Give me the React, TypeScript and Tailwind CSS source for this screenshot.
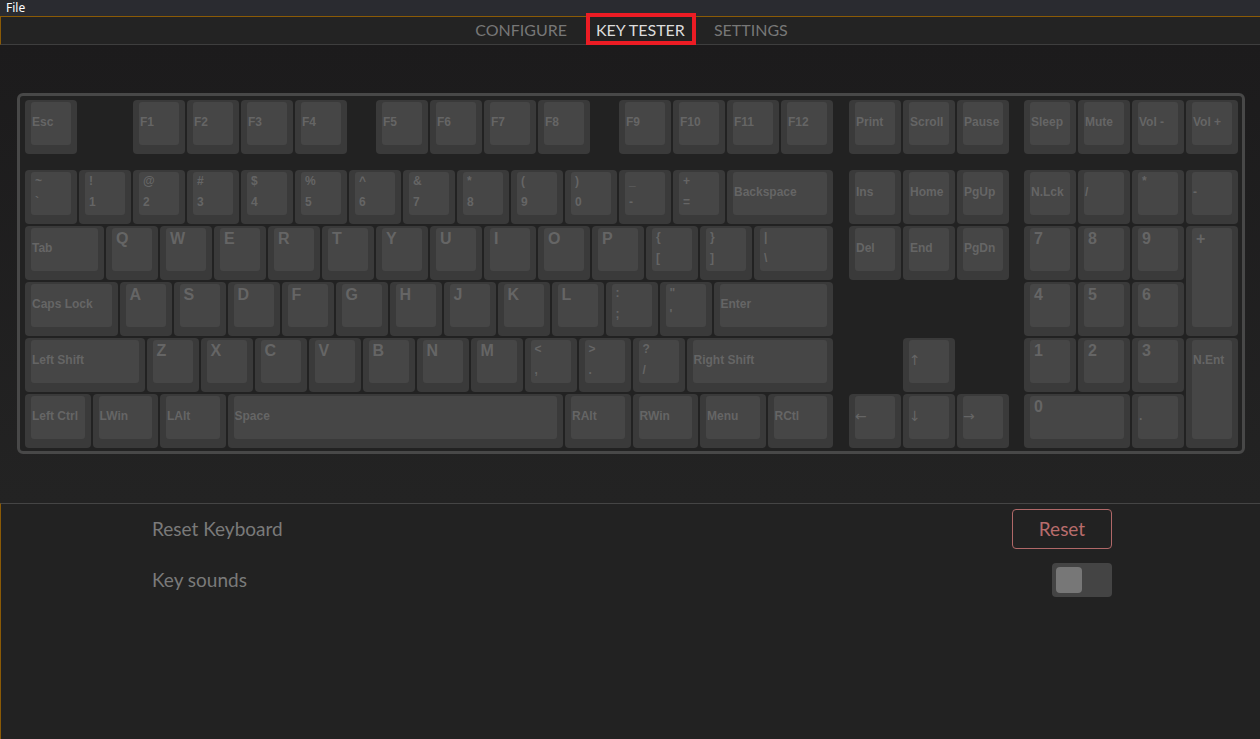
import React from "react";

type KeyDef = {
  n?: string; // name label (small, centered)
  c?: string; // character label (large, top)
  t?: string; // two-label top
  b?: string; // two-label bottom
  a?: boolean; // arrow glyph
  w?: number;
  sp?: number; // spacer width in units
};

const U = 54;

const fnRow: KeyDef[] = [
  { n: "Esc" },
  { sp: 1 },
  { n: "F1" },
  { n: "F2" },
  { n: "F3" },
  { n: "F4" },
  { sp: 0.5 },
  { n: "F5" },
  { n: "F6" },
  { n: "F7" },
  { n: "F8" },
  { sp: 0.5 },
  { n: "F9" },
  { n: "F10" },
  { n: "F11" },
  { n: "F12" },
];

const mainRows: KeyDef[][] = [
  [
    { t: "~", b: "`" },
    { t: "!", b: "1" },
    { t: "@", b: "2" },
    { t: "#", b: "3" },
    { t: "$", b: "4" },
    { t: "%", b: "5" },
    { t: "^", b: "6" },
    { t: "&", b: "7" },
    { t: "*", b: "8" },
    { t: "(", b: "9" },
    { t: ")", b: "0" },
    { t: "_", b: "-" },
    { t: "+", b: "=" },
    { n: "Backspace", w: 2 },
  ],
  [
    { n: "Tab", w: 1.5 },
    ..."QWERTYUIOP".split("").map((c) => ({ c })),
    { t: "{", b: "[" },
    { t: "}", b: "]" },
    { t: "|", b: "\\", w: 1.5 },
  ],
  [
    { n: "Caps Lock", w: 1.75 },
    ..."ASDFGHJKL".split("").map((c) => ({ c })),
    { t: ":", b: ";" },
    { t: "\"", b: "'" },
    { n: "Enter", w: 2.25 },
  ],
  [
    { n: "Left Shift", w: 2.25 },
    ..."ZXCVBNM".split("").map((c) => ({ c })),
    { t: "<", b: "," },
    { t: ">", b: "." },
    { t: "?", b: "/" },
    { n: "Right Shift", w: 2.75 },
  ],
  [
    { n: "Left Ctrl", w: 1.25 },
    { n: "LWin", w: 1.25 },
    { n: "LAlt", w: 1.25 },
    { n: "Space", w: 6.25 },
    { n: "RAlt", w: 1.25 },
    { n: "RWin", w: 1.25 },
    { n: "Menu", w: 1.25 },
    { n: "RCtl", w: 1.25 },
  ],
];

const navTop: KeyDef[] = [{ n: "Print" }, { n: "Scroll" }, { n: "Pause" }];
const navRows: KeyDef[][] = [
  [{ n: "Ins" }, { n: "Home" }, { n: "PgUp" }],
  [{ n: "Del" }, { n: "End" }, { n: "PgDn" }],
  [],
  [{ sp: 1 }, { n: "↑", a: true }],
  [
    { n: "←", a: true },
    { n: "↓", a: true },
    { n: "→", a: true },
  ],
];

const padTop: KeyDef[] = [{ n: "Sleep" }, { n: "Mute" }, { n: "Vol -" }, { n: "Vol +" }];

function Cap({ k }: { k: KeyDef }) {
  return (
    <div className="h-full rounded-[4px] bg-[#3a3a3a] pt-[2px] px-[6px] pb-[9px]">
      <div className="h-full rounded-[3px] bg-[#464646] text-[#656565] font-bold whitespace-nowrap">
        {k.n !== undefined && !k.a && (
          <div className="pl-[1px] pt-[13px] text-[12px] leading-[14px]">{k.n}</div>
        )}
        {k.a && (
          <div className="pl-[0px] pt-[12px] text-[14px] leading-[16px] font-normal font-['DejaVu_Sans',sans-serif]">
            {k.n}
          </div>
        )}
        {k.c !== undefined && (
          <div className="pl-[4px] pt-[2px] text-[16px] leading-[18px]">{k.c}</div>
        )}
        {k.t !== undefined && (
          <div className="pl-[4px] pt-[2px] text-[12px] leading-[14px]">
            <div>{k.t}</div>
            <div className="mt-[7px]">{k.b}</div>
          </div>
        )}
      </div>
    </div>
  );
}

function Key({ k }: { k: KeyDef }) {
  if (k.sp) return <div className="shrink-0" style={{ width: k.sp * U }} />;
  return (
    <div className="h-[54px] mr-[2px] shrink-0" style={{ width: (k.w ?? 1) * U - 2 }}>
      <Cap k={k} />
    </div>
  );
}

function Row({ keys }: { keys: KeyDef[] }) {
  return (
    <div className="flex h-[54px] mb-[2px]">
      {keys.map((k, i) => (
        <Key key={i} k={k} />
      ))}
    </div>
  );
}

function Numpad() {
  return (
    <div className="grid grid-cols-[repeat(4,52px)] auto-rows-[54px] gap-[2px]">
      <Cap k={{ n: "N.Lck" }} />
      <Cap k={{ n: "/" }} />
      <Cap k={{ t: "*", b: "" }} />
      <Cap k={{ n: "-" }} />
      <Cap k={{ c: "7" }} />
      <Cap k={{ c: "8" }} />
      <Cap k={{ c: "9" }} />
      <div className="row-span-2">
        <Cap k={{ c: "+" }} />
      </div>
      <Cap k={{ c: "4" }} />
      <Cap k={{ c: "5" }} />
      <Cap k={{ c: "6" }} />
      <Cap k={{ c: "1" }} />
      <Cap k={{ c: "2" }} />
      <Cap k={{ c: "3" }} />
      <div className="row-span-2">
        <Cap k={{ n: "N.Ent" }} />
      </div>
      <div className="col-span-2">
        <Cap k={{ c: "0" }} />
      </div>
      <Cap k={{ n: "." }} />
    </div>
  );
}

function Keyboard() {
  return (
    <div className="ml-[17px] inline-flex rounded-[6px] border-[3px] border-[#484848] bg-[#222222] pt-[4px] pl-[5px] pr-[2px] pb-[1px] font-['Liberation_Sans',Arial,sans-serif]">
      <div>
        <Row keys={fnRow} />
        <div className="h-[14px]" />
        {mainRows.map((r, i) => (
          <Row key={i} keys={r} />
        ))}
      </div>
      <div className="ml-[14px]">
        <Row keys={navTop} />
        <div className="h-[14px]" />
        {navRows.map((r, i) => (
          <Row key={i} keys={r} />
        ))}
      </div>
      <div className="ml-[13px]">
        <Row keys={padTop} />
        <div className="h-[14px]" />
        <Numpad />
      </div>
    </div>
  );
}

export default function App() {
  const tabs = ["CONFIGURE", "KEY TESTER", "SETTINGS"];
  return (
    <div className="w-[1260px] h-[739px] overflow-hidden flex flex-col bg-[#1f1f1f] font-['Lato','Noto_Sans',sans-serif]">
      <div className="h-4 bg-[#2a2b30] pl-[6px] text-[12px] leading-4 text-white font-['Noto_Sans',sans-serif]">
        File
      </div>
      <div className="relative h-[29px] shrink-0 border-t border-l border-[#8a5a06] border-b border-b-[#3e3e3e] bg-[#232323]">
        <nav className="flex h-full items-center justify-center gap-[29px] pl-[2px] pb-[2px]">
          {tabs.map((t) => (
            <div
              key={t}
              className={
                t === "KEY TESTER"
                  ? "relative text-[16px] leading-[19px] text-[#dcdcdc]"
                  : "text-[16px] leading-[19px] text-[#777777]"
              }
            >
              {t}
              {t === "KEY TESTER" && (
                <div className="absolute -left-[10px] -right-[11px] -top-[7px] -bottom-[6px] border-[4px] border-[#ec1c24]" />
              )}
            </div>
          ))}
        </nav>
      </div>
      <div className="h-[458px] shrink-0 bg-linear-to-b from-[#1c1b1c] to-[#232323] pt-[48px]">
        <Keyboard />
      </div>
      <div className="flex-1 border-t border-t-[#454545] border-l border-l-[#8a5a06] bg-[#222222]">
        <div className="ml-[151px] w-[960px] pt-[5px]">
          <div className="flex h-[40px] items-center justify-between">
            <span className="text-[19px] text-[#7a7a7a]">Reset Keyboard</span>
            <button className="h-[40px] w-[100px] rounded-[4px] border border-[#b06868] text-[19px] text-[#b86c6c]">
              Reset
            </button>
          </div>
          <div className="mt-[13px] flex h-[36px] items-center justify-between">
            <span className="text-[19px] text-[#7a7a7a]">Key sounds</span>
            <div className="flex h-[34px] w-[60px] items-center rounded-[4px] bg-[#444444] pl-[4px]">
              <div className="h-[26px] w-[26px] rounded-[4px] bg-[#777777]" />
            </div>
          </div>
        </div>
      </div>
    </div>
  );
}
